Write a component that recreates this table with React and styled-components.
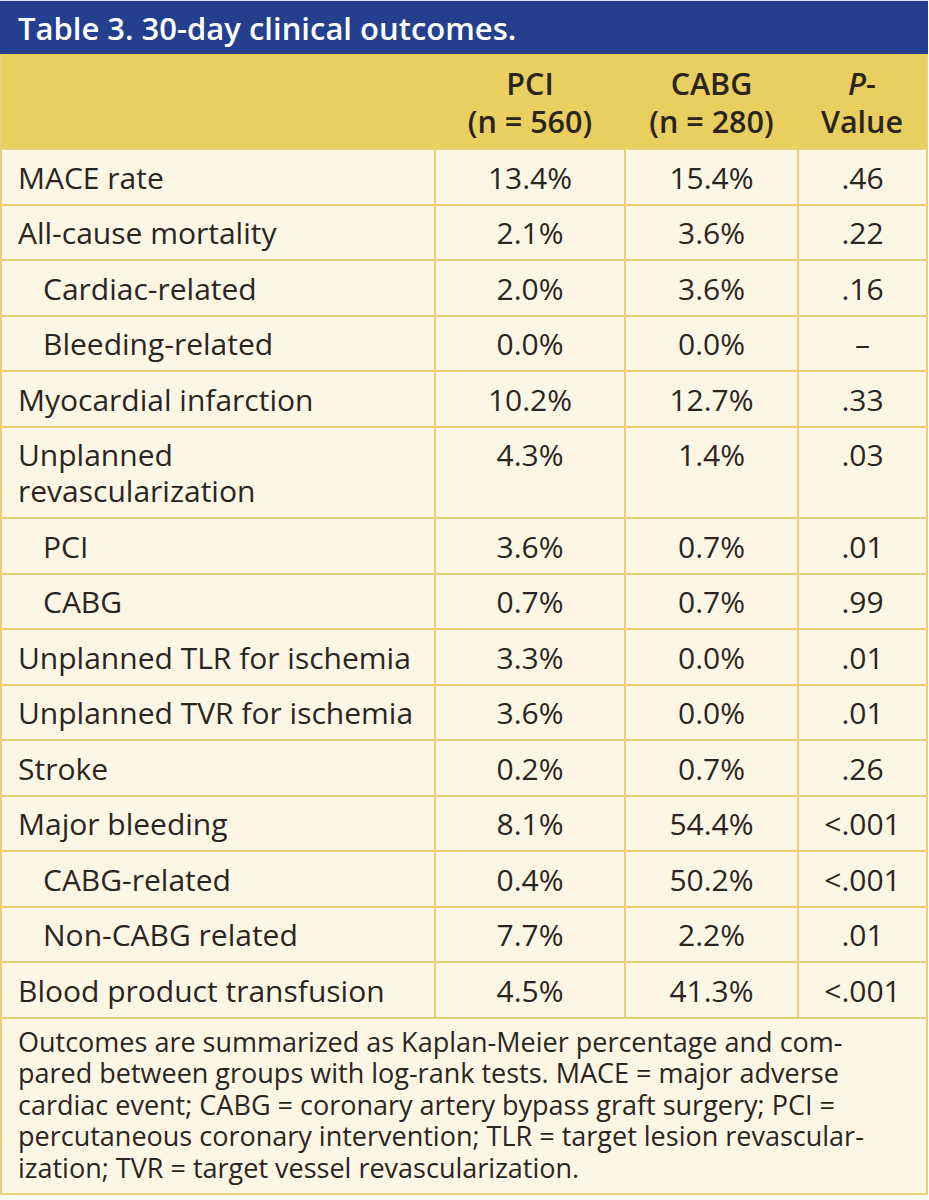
import React from "react";
import styled, { createGlobalStyle } from "styled-components";

const GlobalStyle = createGlobalStyle`
  body {
    margin: 0;
    background: #ffffff;
    font-family: "Open Sans", "Noto Sans", sans-serif;
    color: #2b2521;
  }
`;

const Wrapper = styled.div`
  width: 928px;
  box-sizing: border-box;
`;

const TitleBar = styled.div`
  height: 54px;
  background: #233f8d;
  color: #ffffff;
  font-size: 31px;
  font-weight: 600;
  padding-left: 18px;
  display: flex;
  align-items: center;
  border-top: 1px solid #dfe4f0;
  box-sizing: border-box;
`;

const Table = styled.table`
  width: 100%;
  border-collapse: collapse;
  table-layout: fixed;
  background: #fef6e4;
  border: 2px solid #e8d174;
  border-top: none;
`;

const HeadRow = styled.tr`
  background: #e8cf5f;
  height: 95px;
`;

const HeadCell = styled.th`
  font-size: 30.5px;
  font-weight: 600;
  line-height: 38px;
  text-align: center;
  vertical-align: middle;
  padding: 2px 0 0;
`;

const Cell = styled.td`
  border: 2px solid #e8d174;
  font-size: 30px;
  line-height: 36px;
  padding: 9.5px 8px 8px ${(p) => (p.$indent ? "41px" : "16px")};
  text-align: left;
  vertical-align: top;
  white-space: nowrap;
`;

const ValueCell = styled(Cell)`
  text-align: center;
  padding-left: 0;
  padding-right: 0;
`;

const Note = styled.td`
  border: 2px solid #e8d174;
  font-size: 27px;
  line-height: 31.6px;
  padding: 7px 16px 10px;
  color: #2b2521;
  white-space: nowrap;
`;

const rows = [
  ["MACE rate", "13.4%", "15.4%", ".46"],
  ["All-cause mortality", "2.1%", "3.6%", ".22"],
  ["Cardiac-related", "2.0%", "3.6%", ".16", true],
  ["Bleeding-related", "0.0%", "0.0%", "–", true],
  ["Myocardial infarction", "10.2%", "12.7%", ".33"],
  ["Unplanned revascularization", "4.3%", "1.4%", ".03"],
  ["PCI", "3.6%", "0.7%", ".01", true],
  ["CABG", "0.7%", "0.7%", ".99", true],
  ["Unplanned TLR for ischemia", "3.3%", "0.0%", ".01"],
  ["Unplanned TVR for ischemia", "3.6%", "0.0%", ".01"],
  ["Stroke", "0.2%", "0.7%", ".26"],
  ["Major bleeding", "8.1%", "54.4%", "<.001"],
  ["CABG-related", "0.4%", "50.2%", "<.001", true],
  ["Non-CABG related", "7.7%", "2.2%", ".01", true],
  ["Blood product transfusion", "4.5%", "41.3%", "<.001"],
];

const App = () => {
  return (
    <Wrapper>
      <GlobalStyle />
      <TitleBar>Table 3. 30-day clinical outcomes.</TitleBar>
      <Table>
        <colgroup>
          <col style={{ width: "434px" }} />
          <col style={{ width: "190px" }} />
          <col style={{ width: "173px" }} />
          <col />
        </colgroup>
        <thead>
          <HeadRow>
            <HeadCell />
            <HeadCell>
              PCI
              <br />
              (n = 560)
            </HeadCell>
            <HeadCell>
              CABG
              <br />
              (n = 280)
            </HeadCell>
            <HeadCell>
              <i>P</i>-
              <br />
              Value
            </HeadCell>
          </HeadRow>
        </thead>
        <tbody>
          {rows.map(([label, pci, cabg, p, indent]) => (
            <tr key={label}>
              <Cell $indent={indent}>
                {label === "Unplanned revascularization" ? (
                  <>
                    Unplanned
                    <br />
                    revascularization
                  </>
                ) : (
                  label
                )}
              </Cell>
              <ValueCell>{pci}</ValueCell>
              <ValueCell>{cabg}</ValueCell>
              <ValueCell>{p}</ValueCell>
            </tr>
          ))}
          <tr>
            <Note colSpan={4}>
              Outcomes are summarized as Kaplan-Meier percentage and com-
              <br />
              pared between groups with log-rank tests. MACE = major adverse
              <br />
              cardiac event; CABG = coronary artery bypass graft surgery; PCI =
              <br />
              percutaneous coronary intervention; TLR = target lesion revascular-
              <br />
              ization; TVR = target vessel revascularization.
            </Note>
          </tr>
        </tbody>
      </Table>
    </Wrapper>
  );
};

export default App;
